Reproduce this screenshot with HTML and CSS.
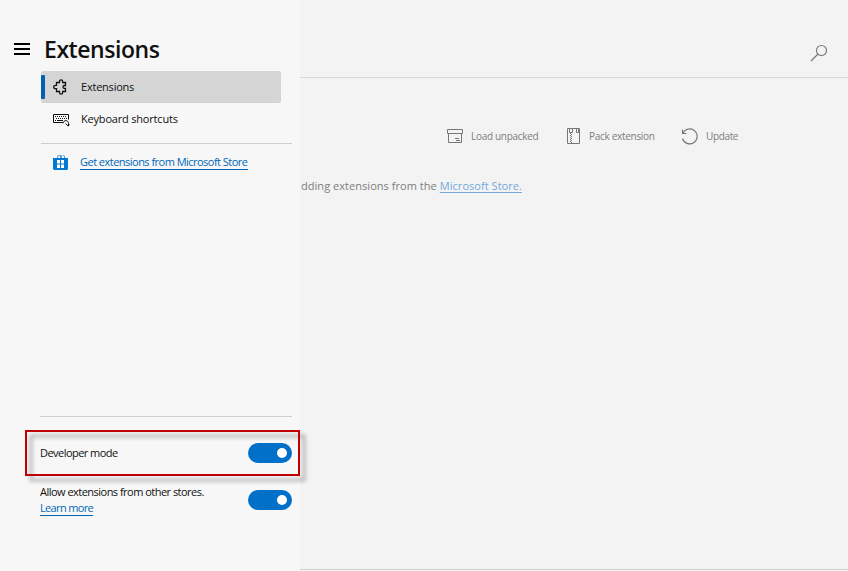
FILE: index.html
```html
<!DOCTYPE html>
<html lang="en">
<head>
<meta charset="utf-8">
<title>Extensions</title>
<link rel="stylesheet" href="styles.css">
</head>
<body>
<div class="app">
  <aside class="sidebar">
    <header class="brand">
      <div class="menu" aria-label="Menu"><i></i><i></i><i></i></div>
      <h1><span>Extensions</span></h1>
    </header>
    <nav>
      <a class="item active">
        <svg width="16" height="16" viewBox="0 0 16 16" fill="none" stroke="#111" stroke-width="1.3"><path d="M3.500 3.500h3V2.400a1.600 1.600 0 0 1 3.200 0v1.100h2.800v3h-1a1.500 1.500 0 0 0 0 3h1v3H9.700v1.100a1.600 1.600 0 0 1-3.200 0v-1.100h-3v-2.800H2.400a1.700 1.700 0 0 1 0-3.400h1.100z"/></svg>
        <span class="t-ext">Extensions</span>
      </a>
      <a class="item">
        <svg width="16" height="16" viewBox="0 0 16 16" fill="none" stroke="#111"><path d="M10 11.500H.5v-8h15v5"/><path d="M2 5.500h12M3 7.500h11" stroke-dasharray="1 1"/><path d="M2 9.500h1M4 9.500h6"/><path d="M10 12.300C10.500 8.700 15.500 8.700 15.500 12.500v2.500M12.500 12.500l2.700 2.600L16.500 13.500"/></svg>
        <span class="t-key">Keyboard shortcuts</span>
      </a>
    </nav>
    <div class="store">
      <svg width="16" height="16" viewBox="0 0 16 16"><path d="M4.500 4V2.300a2 2 0 0 1 4 0V4M7.500 4V1.800a2 2 0 0 1 4 0V4" fill="none" stroke="#3f96d9"/><path fill="#0078d4" d="M0 3h15v11l-1 1H1l-1-1z"/><path fill="#fff" d="M4 5h3v3.500H4zM8 5h3v3.500H8zM4 9.500h3V13H4zM8 9.500h3V13H8z"/></svg>
      <a class="link t-get">Get extensions from Microsoft Store</a>
    </div>
    <footer class="settings">
      <div class="setting developer"><span class="t-dev">Developer mode</span><b class="toggle"></b></div>
      <div class="setting other"><div class="copy"><span class="t-allow">Allow extensions from other stores.</span><a class="link t-learn">Learn more</a></div><b class="toggle"></b></div>
    </footer>
  </aside>
  <main>
    <div class="search"><svg width="18" height="18" viewBox="0 0 18 18" fill="none" stroke="#777" stroke-width="1.15"><circle cx="11.500" cy="6.500" r="5"/><path d="M8 10 1 17"/></svg></div>
    <div class="content">
      <div class="actions">
        <div class="action load"><svg width="16" height="15" viewBox="0 0 16 15" fill="none" stroke="#777"><path d="M.5.5h15v4H.5zM1.500 4.500v9h13v-9M8 9.500h4M9 11.500h4"/></svg><span class="t-load">Load unpacked</span></div>
        <div class="action pack"><svg width="13" height="16" viewBox="0 0 13 16" fill="none" stroke="#777"><path d="M.5.5h12v15H.5zM2.500.5v4h3v-4M9.500.5v4h2v-4"/><path d="M3.500 5v10" stroke-dasharray="1 1"/><path d="M4.500 6v10" stroke-dasharray="1 1"/></svg><span class="t-pack">Pack extension</span></div>
        <div class="action update"><svg width="18" height="17" viewBox="0 0 18 17" fill="none" stroke="#777" stroke-width="1.150"><path d="M2 5A7.500 7.500 0 1 1 1.500 10.500M1.500 1.500v4h4"/></svg><span class="t-update">Update</span></div>
      </div>
      <p class="message"><span class="t-add">dding extensions from the</span><a class="t-store">Microsoft Store.</a></p>
    </div>
  </main>
</div>
</body>
</html>
```
FILE: styles.css
```css
*{box-sizing:border-box}
body{margin:0;font:11px/16px "Open Sans","Noto Sans",sans-serif;color:#111;background:#f3f3f3}
.app{display:grid;grid-template-columns:300px 1fr;height:571px}
.sidebar{display:flex;flex-direction:column;background:#f7f7f7;padding-top:32px;position:relative;z-index:1}
.brand{display:flex;height:39px;padding-left:14px;gap:14px}
.menu{width:16px;padding-top:11px;display:flex;flex-direction:column;gap:3px}
.menu i{height:2px;background:#000}
h1{margin:0;font-size:23px;line-height:35px;font-weight:550;letter-spacing:-.45px;white-space:nowrap}
span,.link,.message a{white-space:nowrap}
.t-ext{letter-spacing:-.22px}
.t-key{letter-spacing:-.19px}
.t-get,.t-allow{letter-spacing:-.52px}
.t-dev{letter-spacing:-.54px}
.t-learn{letter-spacing:-.66px}
.t-load,.t-pack{letter-spacing:-.3px}
.t-update{letter-spacing:-.36px}
.t-add{letter-spacing:.04px}
.t-store{letter-spacing:.04px}
nav{margin-left:41px;width:240px}
.item{display:flex;align-items:center;height:32px;padding-left:12px;gap:12px}
.item svg{width:16px;overflow:visible;flex:none}
.active{background:#d5d5d5;border-radius:2px;position:relative}
.active::before{content:"";position:absolute;left:0;top:4px;width:4px;height:24px;background:#0062b1;border-radius:1px}
.store{display:flex;align-items:flex-start;gap:11px;margin:8px 8px 0 41px;border-top:1px solid #cecece;padding:11px 0 0 12px}
.link{color:#0067b8;border-bottom:1px solid #0067b8;height:15px;line-height:15px}
.store .link{line-height:13px}
.copy .link{height:16px;line-height:16px}
.settings{margin-top:auto;margin-left:40px;margin-right:8px;height:155px;border-top:1px solid #cecece}
.setting{display:flex;justify-content:space-between}
.toggle{width:44px;height:20px;border-radius:10px;background:#0070c9;flex:none;display:flex;align-items:center;justify-content:flex-end;padding-right:5px}
.toggle::after{content:"";width:10px;height:10px;border-radius:50%;background:#fff}
.developer{align-items:center;height:46px;margin:13px -8px 0 -15px;position:relative;padding:0 8px 0 15px}
.developer::after{content:"";position:absolute;inset:0;border:2px solid #c00000;filter:drop-shadow(5px 5px 2px rgba(0,0,0,.4))}
.other{margin-top:8px}
.other .toggle{margin-top:6px}
.copy{display:flex;flex-direction:column;align-items:flex-start}
main{display:flex;flex-direction:column;border-bottom:1px solid #d4d4d4;margin-bottom:1px;color:#7d7d7d}
.search{height:78px;border-bottom:1px solid #d8d8d8;display:flex;justify-content:flex-end;padding:44px 20px 0 0}
.content{padding-top:49px}
.actions{display:flex;height:18px;padding-left:147px;font-size:10px}
.action{display:flex;align-items:center;gap:8px;flex:none}
.action svg{overflow:visible;flex:none}
.load{width:120px}.pack{width:114px;gap:9px}.update{gap:7px}
.message{display:flex;gap:3px;margin:33px 0 0 1px}
.message a{color:#73a8dc;text-decoration:underline;text-underline-offset:2px}
```
